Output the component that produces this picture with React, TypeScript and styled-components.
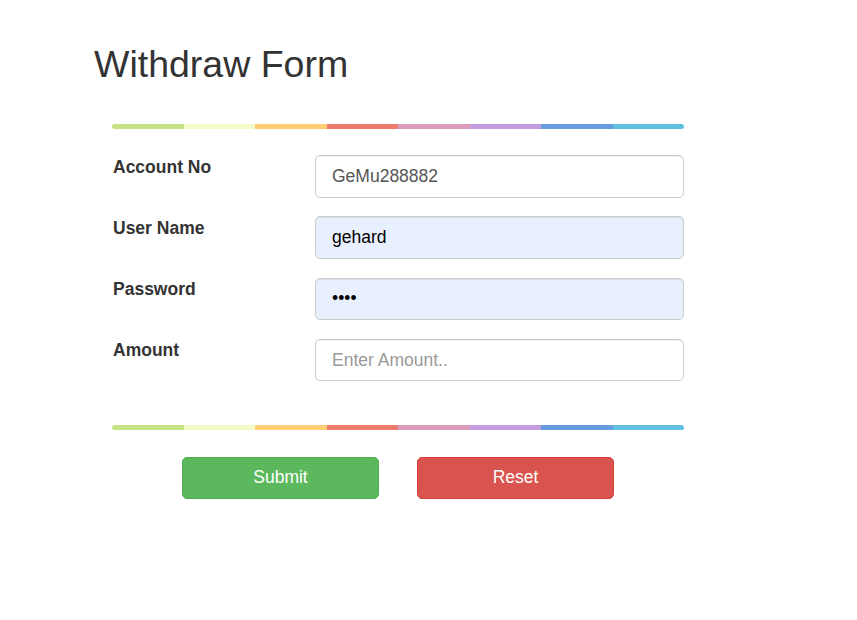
import React from "react";
import styled, { createGlobalStyle } from "styled-components";

const Global = createGlobalStyle`
  html, body { margin: 0; padding: 0; background: #fff; }
  body { font-family: "Liberation Sans", Arial, Helvetica, sans-serif; color: #333; }
  * { box-sizing: border-box; }
`;

const Page = styled.div`
  width: 857px;
  height: 620px;
  padding-top: 44px;
`;

const Title = styled.h2`
  margin: 0 0 0 94px;
  font-size: 37.5px;
  line-height: 41px;
  font-weight: 500;
  color: #333;
`;

const Form = styled.form`
  width: 572px;
  margin-left: 112px;
  display: flex;
  flex-direction: column;
`;

const Rainbow = styled.div<{ $top: number; $bottom: number }>`
  display: flex;
  height: 5px;
  border-radius: 3px;
  overflow: hidden;
  margin-top: ${(p) => p.$top}px;
  margin-bottom: ${(p) => p.$bottom}px;
`;

const Seg = styled.span<{ $c: string }>`
  flex: 1;
  background: ${(p) => p.$c};
`;

const Fields = styled.div`
  display: flex;
  flex-direction: column;
  gap: 18.75px;
`;

const Row = styled.div`
  display: flex;
  align-items: flex-start;
  height: 42.5px;
`;

const Label = styled.label`
  width: 203px;
  flex: none;
  padding: 1.5px 0 0 1px;
  font-size: 17.5px;
  line-height: 20px;
  font-weight: 700;
  color: #333;
`;

const Input = styled.input<{ $filled?: boolean }>`
  width: 369px;
  height: 42.5px;
  padding: 0 16px;
  font-family: "Liberation Sans", Arial, Helvetica, sans-serif;
  font-size: 17.5px;
  color: ${(p) => (p.$filled ? "#000" : "#555")};
  background: ${(p) => (p.$filled ? "#e8f0fe" : "#fff")};
  border: 1px solid #ccc;
  border-radius: 5px;
  box-shadow: inset 0 1px 1px rgba(0, 0, 0, 0.075);
  outline: none;
  &::placeholder { color: #999; }
`;

const Buttons = styled.div`
  display: flex;
  gap: 38px;
  padding-left: 70px;
`;

const Button = styled.button<{ $kind: "ok" | "danger" }>`
  width: 197px;
  height: 42px;
  padding: 0 0 2px;
  border-radius: 5px;
  font-family: "Liberation Sans", Arial, Helvetica, sans-serif;
  font-size: 17.5px;
  color: #fff;
  cursor: pointer;
  background: ${(p) => (p.$kind === "ok" ? "#5cb85c" : "#d9534f")};
  border: 1px solid ${(p) => (p.$kind === "ok" ? "#4cae4c" : "#d43f3a")};
`;

const colors = ["#c5e384", "#f4fbc9", "#fdcf72", "#ef7b6c", "#dc9dbd", "#c49ce0", "#679de0", "#60c1e0"];

const Bar = ({ top, bottom }: { top: number; bottom: number }) => (
  <Rainbow $top={top} $bottom={bottom}>
    {colors.map((c) => (
      <Seg key={c} $c={c} />
    ))}
  </Rainbow>
);

export default function App() {
  return (
    <Page>
      <Global />
      <Title>Withdraw Form</Title>
      <Form onSubmit={(e) => e.preventDefault()}>
        <Bar top={39} bottom={26} />
        <Fields>
          <Row>
            <Label>Account No</Label>
            <Input defaultValue="GeMu288882" readOnly />
          </Row>
          <Row>
            <Label>User Name</Label>
            <Input $filled defaultValue="gehard" />
          </Row>
          <Row>
            <Label>Password</Label>
            <Input $filled type="password" defaultValue="abcd" />
          </Row>
          <Row>
            <Label>Amount</Label>
            <Input placeholder="Enter Amount.." />
          </Row>
        </Fields>
        <Bar top={44} bottom={27} />
        <Buttons>
          <Button type="submit" $kind="ok">Submit</Button>
          <Button type="reset" $kind="danger">Reset</Button>
        </Buttons>
      </Form>
    </Page>
  );
}
